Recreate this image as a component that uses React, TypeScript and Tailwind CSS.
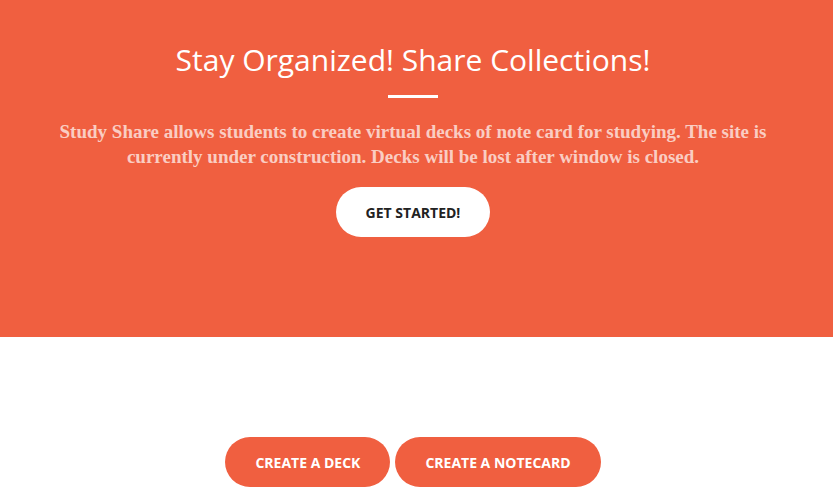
export default function App() {
  return (
    <div className="w-[833px] h-[499px] overflow-hidden bg-white" style={{ fontFamily: '"Open Sans", sans-serif' }}>
      <header className="bg-[#f05f40] h-[337px] flex flex-col items-center pt-[39px] pr-[7px]">
        <h1 className="text-white text-[30px] leading-[42px] font-normal">Stay Organized! Share Collections!</h1>
        <hr className="w-[50px] border-0 border-t-[3px] border-white mt-[14px] mb-[21px]" />
        <p
          className="text-white/70 font-bold text-[19px] leading-[25px] text-center w-[730px]"
          style={{ fontFamily: '"Liberation Serif", serif' }}
        >
          Study Share allows students to create virtual decks of note card for studying. The site is currently under construction. Decks will be lost after window is closed.
        </p>
        <button className="mt-[18px] bg-white text-[#222] rounded-full px-[30px] h-[50px] text-[14px] font-bold uppercase">
          Get Started!
        </button>
      </header>
      <section className="flex justify-center gap-[5px] pt-[100px] pr-[7px]">
        <button className="bg-[#f05f40] text-white rounded-full px-[30px] h-[50px] text-[14px] font-bold uppercase">Create a Deck</button>
        <button className="bg-[#f05f40] text-white rounded-full px-[30px] h-[50px] text-[14px] font-bold uppercase">Create a Notecard</button>
      </section>
    </div>
  );
}
